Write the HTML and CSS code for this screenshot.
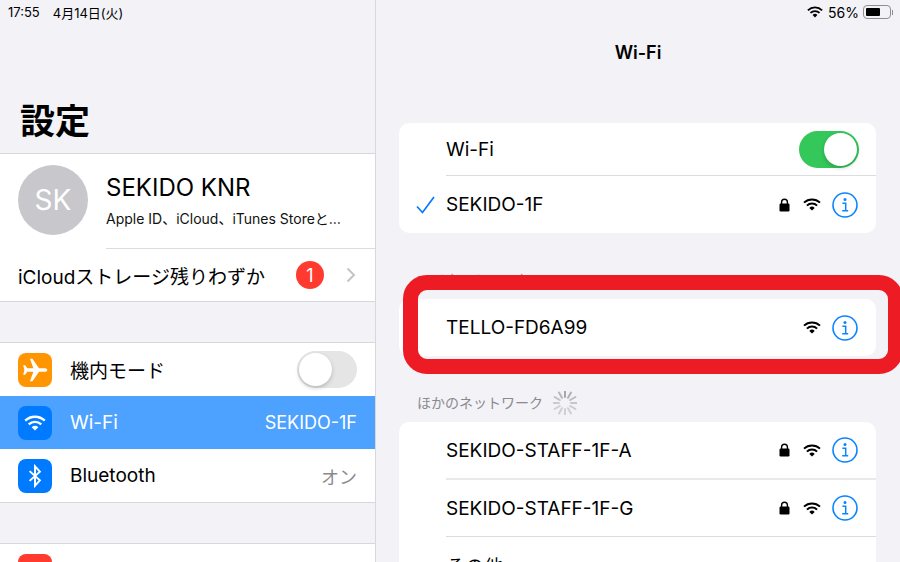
FILE: index.html
```html
<!DOCTYPE html>
<html lang="ja">

<head>
    <meta charset="UTF-8">
    <meta name="viewport" content="width=device-width, initial-scale=1.0">
    <title>Wi-Fi</title>
    <link rel="stylesheet" href="styles.css">
</head>

<body>

    <svg class="defs" width="0" height="0">
        <symbol id="wifi" viewBox="0 0 18 13">
            <path d="M1 4.6a11.6 11.6 0 0 1 16 0M3.9 7.6a7.4 7.4 0 0 1 10.2 0" fill="none" stroke="currentColor" stroke-width="2"/>
            <path d="M9 12.6 6.3 9.9a3.9 3.9 0 0 1 5.4 0z" fill="currentColor"/>
        </symbol>
        <symbol id="lock" viewBox="0 0 11 14">
            <path d="M2.6 6V4.1a2.9 2.9 0 0 1 5.8 0V6" fill="none" stroke="currentColor" stroke-width="1.4"/>
            <rect x="0.5" y="5.6" width="10" height="7.9" rx="1.2" fill="currentColor"/>
        </symbol>
        <symbol id="info" viewBox="0 0 26 26">
            <circle cx="13" cy="13" r="12" fill="none" stroke="currentColor" stroke-width="1.6"/>
            <circle cx="13" cy="7.6" r="1.5" fill="currentColor"/>
            <path d="M10.4 11.2h3.3v7.4M10.2 18.8h6" fill="none" stroke="currentColor" stroke-width="1.5"/>
        </symbol>
    </svg>

    <aside class="side">
        <div class="status">
            <span class="time">17:55</span>
            <span>4月14日(火)</span>
        </div>
        <h1 class="big-title">設定</h1>

        <div class="group">
            <div class="profile">
                <div class="avatar">SK</div>
                <div class="profile-text">
                    <div class="profile-name">SEKIDO KNR</div>
                    <div class="profile-sub">Apple ID、iCloud、iTunes Storeと…</div>
                </div>
            </div>
            <div class="line line-profile"></div>
            <div class="storage">
                <span class="grow">iCloudストレージ残りわずか</span>
                <span class="badge">1</span>
                <svg class="chevron" viewBox="0 0 10 16" width="10" height="16">
                    <path d="M1.5 1.5 8 8l-6.5 6.500" fill="none" stroke="currentColor" stroke-width="2"/>
                </svg>
            </div>
        </div>

        <div class="group">
            <div class="item">
                <span class="app orange">
                    <svg viewBox="0 0 24 24" width="28" height="28">
                        <path d="M22.500 12c0-1-.9-1.600-1.800-1.600h-5.200L9.800 2.400H7.700l2.900 8H5.400L3.600 8H1.900l1 4-1 4h1.700l1.800-2.400h5.200l-2.900 8h2.100l5.700-8h5.200c.9 0 1.800-.6 1.800-1.600z" fill="#fff"/>
                    </svg>
                </span>
                <span class="grow">機内モード</span>
                <span class="switch off"><span class="knob"></span></span>
            </div>
            <div class="item active">
                <span class="app blue">
                    <svg class="app-wifi" width="22" height="16"><use href="#wifi"/></svg>
                </span>
                <span class="grow">Wi-Fi</span>
                <span class="value">SEKIDO-1F</span>
            </div>
            <div class="item">
                <span class="app blue">
                    <svg viewBox="0 0 24 24" width="26" height="26">
                        <path d="M7 7.500 16.500 16 12 21V3l4.500 5L7 16.500" fill="none" stroke="#fff" stroke-width="1.800"/>
                    </svg>
                </span>
                <span class="grow">Bluetooth</span>
                <span class="value muted">オン</span>
            </div>
        </div>

        <div class="group">
            <div class="item">
                <span class="app red"></span>
                <span class="grow">通知</span>
            </div>
        </div>
    </aside>

    <main class="content">
        <div class="status status-right">
            <svg class="status-wifi" width="16" height="12"><use href="#wifi"/></svg>
            <span>56%</span>
            <span class="battery"><span class="battery-level"></span></span>
            <span class="battery-tip"></span>
        </div>
        <div class="nav-title">Wi-Fi</div>

        <section class="card">
            <div class="row row-short">
                <span class="check"></span>
                <span class="grow">Wi-Fi</span>
                <span class="switch on"><span class="knob"></span></span>
            </div>
            <div class="sep"></div>
            <div class="row">
                <span class="check">
                    <svg viewBox="0 0 19 18" width="19" height="18">
                        <path d="M1 10.500 6.500 16.500 18 1" fill="none" stroke="currentColor" stroke-width="1.700"/>
                    </svg>
                </span>
                <span class="grow">SEKIDO-1F</span>
                <svg class="ic-lock" width="11" height="14"><use href="#lock"/></svg>
                <svg class="ic-wifi" width="18" height="13"><use href="#wifi"/></svg>
                <svg class="ic-info" width="26" height="26"><use href="#info"/></svg>
            </div>
        </section>

        <div class="section-label">マイネットワーク</div>
        <section class="card">
            <div class="row">
                <span class="check"></span>
                <span class="grow">TELLO-FD6A99</span>
                <svg class="ic-wifi" width="18" height="13"><use href="#wifi"/></svg>
                <svg class="ic-info" width="26" height="26"><use href="#info"/></svg>
            </div>
        </section>

        <div class="section-label">
            ほかのネットワーク
            <svg class="spinner" viewBox="-12 -12 24 24" width="24" height="24">
                <path d="M0-12V-6" opacity=".75"/>
                <path d="M6-10.400 3-5.200" opacity=".65"/>
                <path d="M10.400-6 5.200-3" opacity=".55"/>
                <path d="M12 0H6" opacity=".45"/>
                <path d="M10.400 6 5.200 3" opacity=".4"/>
                <path d="M6 10.400 3 5.200" opacity=".35"/>
                <path d="M0 12V6" opacity=".35"/>
                <path d="M-6 10.400-3 5.200" opacity=".35"/>
                <path d="M-10.400 6-5.200 3" opacity=".35"/>
                <path d="M-12 0H-6" opacity=".4"/>
                <path d="M-10.400-6-5.200-3" opacity=".5"/>
                <path d="M-6-10.400-3-5.200" opacity=".6"/>
            </svg>
        </div>
        <section class="card">
            <div class="row row-a">
                <span class="check"></span>
                <span class="grow">SEKIDO-STAFF-1F-A</span>
                <svg class="ic-lock" width="11" height="14"><use href="#lock"/></svg>
                <svg class="ic-wifi" width="18" height="13"><use href="#wifi"/></svg>
                <svg class="ic-info" width="26" height="26"><use href="#info"/></svg>
            </div>
            <div class="sep sep-thick"></div>
            <div class="row row-a">
                <span class="check"></span>
                <span class="grow">SEKIDO-STAFF-1F-G</span>
                <svg class="ic-lock" width="11" height="14"><use href="#lock"/></svg>
                <svg class="ic-wifi" width="18" height="13"><use href="#wifi"/></svg>
                <svg class="ic-info" width="26" height="26"><use href="#info"/></svg>
            </div>
            <div class="sep"></div>
            <div class="row">
                <span class="check"></span>
                <span class="grow">その他...</span>
            </div>
        </section>

        <div class="highlight"></div>
    </main>

</body>

</html>
```

FILE: styles.css
```css
* {
    padding: 0;
    margin: 0;
    box-sizing: border-box;
}

html,
body {
    height: 562px;
    overflow: hidden;
}

body {
    display: flex;
    background: #f2f2f7;
    color: #000;
    font-family: Inter, "Noto Sans CJK JP", sans-serif;
}

.defs {
    position: absolute;
}

.grow {
    flex: 1;
}

/* left column */

.side {
    width: 376px;
    height: 562px;
    border-right: 1px solid #d8d8dc;
    overflow: hidden;
}

.status {
    display: flex;
    align-items: center;
    height: 24px;
    padding-left: 8px;
    font-size: 13px;
}

.time {
    margin-right: 13px;
}

.big-title {
    height: 129px;
    padding: 72px 0 0 20px;
    font-size: 35px;
    line-height: 50px;
    font-weight: 700;
}

.group {
    margin-bottom: 40px;
    background: #fff;
    border-top: 1px solid #d8d8dc;
    border-bottom: 1px solid #d8d8dc;
    font-size: 19px;
}

.profile {
    display: flex;
    align-items: center;
    height: 94px;
    padding: 0 0 2px 18px;
}

.avatar {
    display: flex;
    align-items: center;
    justify-content: center;
    width: 70px;
    height: 70px;
    margin-right: 18px;
    border-radius: 50%;
    background: #c7c7cc;
    color: #fff;
    font-size: 28px;
}

.profile-name {
    font-size: 24px;
    line-height: 32px;
    margin-bottom: 5px;
}

.profile-sub {
    font-size: 14px;
    line-height: 20px;
    color: #111;
}

.line {
    height: 1px;
    background: #dcdcdf;
}

.line-profile {
    margin-left: 106px;
}

.storage {
    display: flex;
    align-items: center;
    height: 52px;
    padding: 0 19px 0 18px;
}

.badge {
    display: flex;
    align-items: center;
    justify-content: center;
    width: 28px;
    height: 28px;
    margin-right: 22px;
    border-radius: 50%;
    background: #ff3b30;
    color: #fff;
    font-size: 18px;
}

.chevron {
    color: #c4c4c8;
}

.item {
    display: flex;
    align-items: center;
    height: 53px;
    padding: 0 18px;
}

.item.active {
    background: #4da2ff;
    color: #fff;
}

.app {
    display: flex;
    align-items: center;
    justify-content: center;
    width: 34px;
    height: 34px;
    margin-right: 18px;
    border-radius: 8px;
}

.app-wifi {
    color: #fff;
}

.orange {
    background: #ff9500;
}

.blue {
    background: #007aff;
}

.red {
    background: #ff3b30;
}

.value {
    font-size: 18px;
}

.value.muted {
    color: #8a8a8e;
}

/* switches */

.switch {
    display: block;
    width: 60px;
    height: 37px;
    padding: 2px;
    border-radius: 19px;
}

.switch.on {
    display: flex;
    justify-content: flex-end;
    background: #34c759;
}

.switch.off {
    background: #e5e5e5;
}

.knob {
    display: block;
    width: 33px;
    height: 33px;
    border-radius: 50%;
    background: #fff;
    box-shadow: 0 2px 4px rgba(0, 0, 0, 0.2);
}

/* right column */

.content {
    position: relative;
    flex: 1;
    height: 562px;
    overflow: hidden;
}

.status-right {
    justify-content: flex-end;
    padding: 0 7px 0 0;
    font-size: 14px;
}

.status-wifi {
    margin-right: 5px;
}

.battery {
    width: 28px;
    height: 14px;
    margin-left: 4px;
    padding: 2px;
    border: 1px solid #8e8e93;
    border-radius: 4px;
}

.battery-level {
    display: block;
    width: 14px;
    height: 8px;
    border-radius: 1px;
    background: #000;
}

.battery-tip {
    width: 1px;
    height: 5px;
    margin-left: 1px;
    background: #8e8e93;
}

.nav-title {
    height: 58px;
    margin-bottom: 41px;
    line-height: 58px;
    text-align: center;
    font-size: 18px;
    font-weight: 600;
}

.card {
    margin: 0 24px 0 23px;
    border-radius: 10px;
    background: #fff;
    font-size: 19px;
}

.row {
    display: flex;
    align-items: center;
    height: 57px;
    padding-right: 18px;
}

.row-short {
    height: 52px;
    padding-right: 17px;
}

.row-a {
    height: 56px;
}

.sep {
    height: 1px;
    margin-left: 47px;
    background: #dcdcdf;
}

.sep-thick {
    height: 2px;
    background: #e9e9ec;
}

.check {
    width: 47px;
    padding-left: 17px;
    color: #007aff;
}

.check svg {
    display: block;
}

.ic-lock {
    margin-right: 13px;
}

.ic-wifi {
    margin-right: 11px;
}

.ic-info {
    color: #0a84ff;
}

.section-label {
    display: flex;
    align-items: flex-end;
    height: 66px;
    padding: 0 0 9px 41px;
    font-size: 14px;
    line-height: 20px;
    color: #8a8a8e;
}

.spinner {
    margin: 0 0 -2px 10px;
    fill: none;
    stroke: #8e8e93;
    stroke-width: 2;
    stroke-linecap: round;
}

/* red marker drawn over the screenshot */

.highlight {
    position: absolute;
    left: 27px;
    top: 275px;
    width: 500px;
    height: 99px;
    border: 15px solid #ed1c24;
    border-radius: 24px;
}
```
